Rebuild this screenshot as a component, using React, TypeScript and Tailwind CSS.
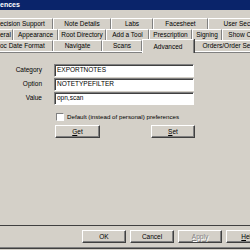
import React from "react";

const face = "bg-[#d4d0c8]";
const font = "font-['Liberation_Sans',Arial,sans-serif]";

type Tab = { label: string; w: number; sel?: boolean };

const rows: Tab[][] = [
  [
    { label: "ecision Support", w: 53 },
    { label: "Note Details", w: 58 },
    { label: "Labs", w: 42 },
    { label: "Facesheet", w: 55 },
    { label: "User Security", w: 70 },
  ],
  [
    { label: "eral", w: 13 },
    { label: "Appearance", w: 45 },
    { label: "Root Directory", w: 48 },
    { label: "Add a Tool", w: 43 },
    { label: "Prescription", w: 43 },
    { label: "Signing", w: 30 },
    { label: "Show Cosigners", w: 60 },
  ],
  [
    { label: "oc Date Format", w: 53 },
    { label: "Navigate", w: 49 },
    { label: "Scans", w: 40 },
    { label: "Advanced", w: 52, sel: true },
    { label: "Orders/Order Sets", w: 70 },
  ],
];

function TabRow({ tabs }: { tabs: Tab[] }) {
  return (
    <div className="flex h-[11px] items-end">
      {tabs.map((t, i) => (
        <div
          key={t.label}
          className={`flex shrink-0 items-center justify-center whitespace-nowrap border-t border-white text-[6.5px] text-black ${
            i === 0 ? "justify-start" : "border-l"
          } border-r border-r-[#808080] shadow-[1px_0_0_#404040] ${
            t.sel
              ? `relative z-10 -mb-[2px] h-[14px] pt-[1px] ${face}`
              : `h-[11px] ${face}`
          }`}
          style={{ width: t.w }}
        >
          {t.label}
        </div>
      ))}
    </div>
  );
}

function Field({ label, value }: { label: string; value: string }) {
  return (
    <div className="flex h-[14px] items-center">
      <div className="w-[42px] text-right text-[6.5px]">{label}</div>
      <div className="ml-[12px] flex h-[13px] w-[140px] items-center border border-t-[#808080] border-l-[#808080] border-r-white border-b-white bg-white pl-[2px] text-[6.5px] shadow-[inset_1px_1px_0_#404040]">
        {value}
      </div>
    </div>
  );
}

function Btn({
  children,
  w,
  disabled,
}: {
  children: React.ReactNode;
  w: number;
  disabled?: boolean;
}) {
  return (
    <div
      className={`flex h-[13px] shrink-0 items-center justify-center border border-t-white border-l-white border-r-[#404040] border-b-[#404040] shadow-[inset_-1px_-1px_0_#808080] text-[6.5px] ${face} ${
        disabled ? "text-[#808080] [text-shadow:1px_1px_0_#fff]" : "text-black"
      }`}
      style={{ width: w }}
    >
      {children}
    </div>
  );
}

export default function App() {
  return (
    <div className={`flex h-[250px] w-[250px] flex-col overflow-hidden ${face} ${font}`}>
      <div className="flex h-[10px] shrink-0 items-center bg-[#0a246a] text-[7px] font-bold text-white">
        ences
      </div>
      <div className="h-[8px] shrink-0" />
      <TabRow tabs={rows[0]} />
      <TabRow tabs={rows[1]} />
      <TabRow tabs={rows[2]} />
      <div className="flex h-[175px] shrink-0 flex-col border-t border-white border-b border-b-[#404040] shadow-[0_1px_0_#808080_inset]">
        <div className="flex flex-col pt-[11px]">
          <Field label="Category" value="EXPORTNOTES" />
          <Field label="Option" value="NOTETYPEFILTER" />
          <Field label="Value" value="opn,scan" />
        </div>
        <div className="mt-[7px] flex items-center pl-[56px]">
          <div className="h-[8px] w-[8px] border border-t-[#808080] border-l-[#808080] border-r-white border-b-white bg-white" />
          <span className="ml-[3px] text-[6.2px]">Default (instead of personal) preferences</span>
        </div>
        <div className="mt-[4px] flex pl-[55px]">
          <Btn w={45}>
            <span className="underline">G</span>et
          </Btn>
          <div className="w-[51px]" />
          <Btn w={44}>
            <span className="underline">S</span>et
          </Btn>
        </div>
      </div>
      <div className="mt-[4px] flex gap-[4px] pl-[82px]">
        <Btn w={44}>OK</Btn>
        <Btn w={44}>Cancel</Btn>
        <Btn w={44} disabled>
          <span className="underline">A</span>pply
        </Btn>
        <Btn w={44}>
          <span className="underline">H</span>elp
        </Btn>
      </div>
      <div className="mt-[4px] h-px bg-[#808080]" />
      <div className="h-px bg-[#404040]" />
    </div>
  );
}
